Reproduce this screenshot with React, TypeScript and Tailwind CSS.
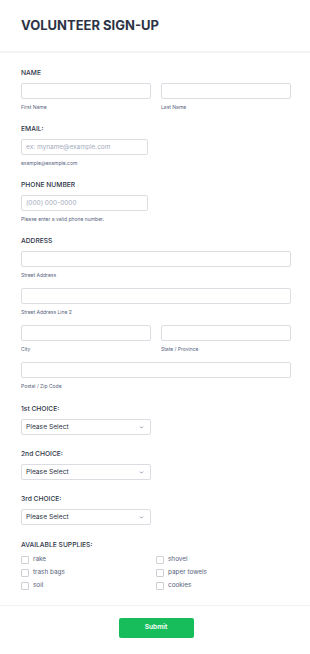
import { ChevronDown } from "lucide-react";

const labelCls = "text-[6.7px] leading-[10px] font-medium text-[#2c3345]";
const subCls = "mt-[5px] text-[5px] leading-[7px] text-[#57647e]";
const inputCls =
  "block h-[16px] w-full rounded-[2px] border border-[#dcdde2] bg-white px-[4px] text-[6.5px] text-[#2c3345] outline-none placeholder:text-[#a4abbd]";

const supplies = [
  ["rake", "shovel"],
  ["trash bags", "paper towels"],
  ["soil", "cookies"],
];

function Field({ sub, placeholder }: { sub: string; placeholder?: string }) {
  return (
    <div>
      <input className={inputCls} placeholder={placeholder} />
      <div className={subCls}>{sub}</div>
    </div>
  );
}

function Choice({ label }: { label: string }) {
  return (
    <div className="mt-[14px]">
      <div className={labelCls}>{label}</div>
      <div className="mt-[5px] flex h-[16px] w-[130px] items-center justify-between rounded-[2px] border border-[#dcdde2] bg-white pl-[4px] pr-[6px]">
        <span className="text-[6.7px] text-[#2c3345]">Please Select</span>
        <ChevronDown className="h-[5px] w-[5px] text-[#57647e]" strokeWidth={3} />
      </div>
    </div>
  );
}

export default function App() {
  return (
    <div className="min-h-screen w-full bg-white font-['Inter',sans-serif]">
      <div className="border-b-2 border-[#f3f3f5] pl-[21px] pr-[19px] pt-[16px] pb-[16px]">
        <h1 className="text-[13px] leading-[19px] font-bold text-[#2c3345]">VOLUNTEER SIGN-UP</h1>
      </div>

      <div className="pl-[21px] pr-[19px] pt-[15px] pb-[13px]">
        <div className={labelCls}>NAME</div>
        <div className="mt-[5px] grid grid-cols-2 gap-[10px]">
          <Field sub="First Name" />
          <Field sub="Last Name" />
        </div>

        <div className="mt-[13px]">
          <div className={labelCls}>EMAIL:</div>
          <div className="mt-[5px] w-[127px]">
            <Field sub="example@example.com" placeholder="ex: myname@example.com" />
          </div>
        </div>

        <div className="mt-[13px]">
          <div className={labelCls}>PHONE NUMBER</div>
          <div className="mt-[5px] w-[127px]">
            <Field sub="Please enter a valid phone number." placeholder="(000) 000-0000" />
          </div>
        </div>

        <div className="mt-[13px]">
          <div className={labelCls}>ADDRESS</div>
          <div className="mt-[5px] flex flex-col gap-[9px]">
            <Field sub="Street Address" />
            <Field sub="Street Address Line 2" />
            <div className="grid grid-cols-2 gap-[10px]">
              <Field sub="City" />
              <Field sub="State / Province" />
            </div>
            <Field sub="Postal / Zip Code" />
          </div>
        </div>

        <Choice label="1st CHOICE:" />
        <Choice label="2nd CHOICE:" />
        <Choice label="3rd CHOICE:" />

        <div className="mt-[15px]">
          <div className={labelCls}>AVAILABLE SUPPLIES:</div>
          <div className="mt-[3px]">
            {supplies.map((row) => (
              <div key={row[0]} className="grid grid-cols-2">
                {row.map((item) => (
                  <label key={item} className="flex h-[13px] items-center gap-[4px]">
                    <span className="h-[8px] w-[8px] rounded-[1px] border border-[#cfd0d6] bg-white" />
                    <span className="text-[6.4px] text-[#57647e]">{item}</span>
                  </label>
                ))}
              </div>
            ))}
          </div>
        </div>
      </div>

      <div className="flex justify-center border-t border-[#f3f3f5] pl-[21px] pr-[19px] pt-[12px]">
        <button className="h-[20px] w-[75px] rounded-[2px] bg-[#18bd5b] text-[6.6px] font-semibold text-white">
          Submit
        </button>
      </div>
    </div>
  );
}
